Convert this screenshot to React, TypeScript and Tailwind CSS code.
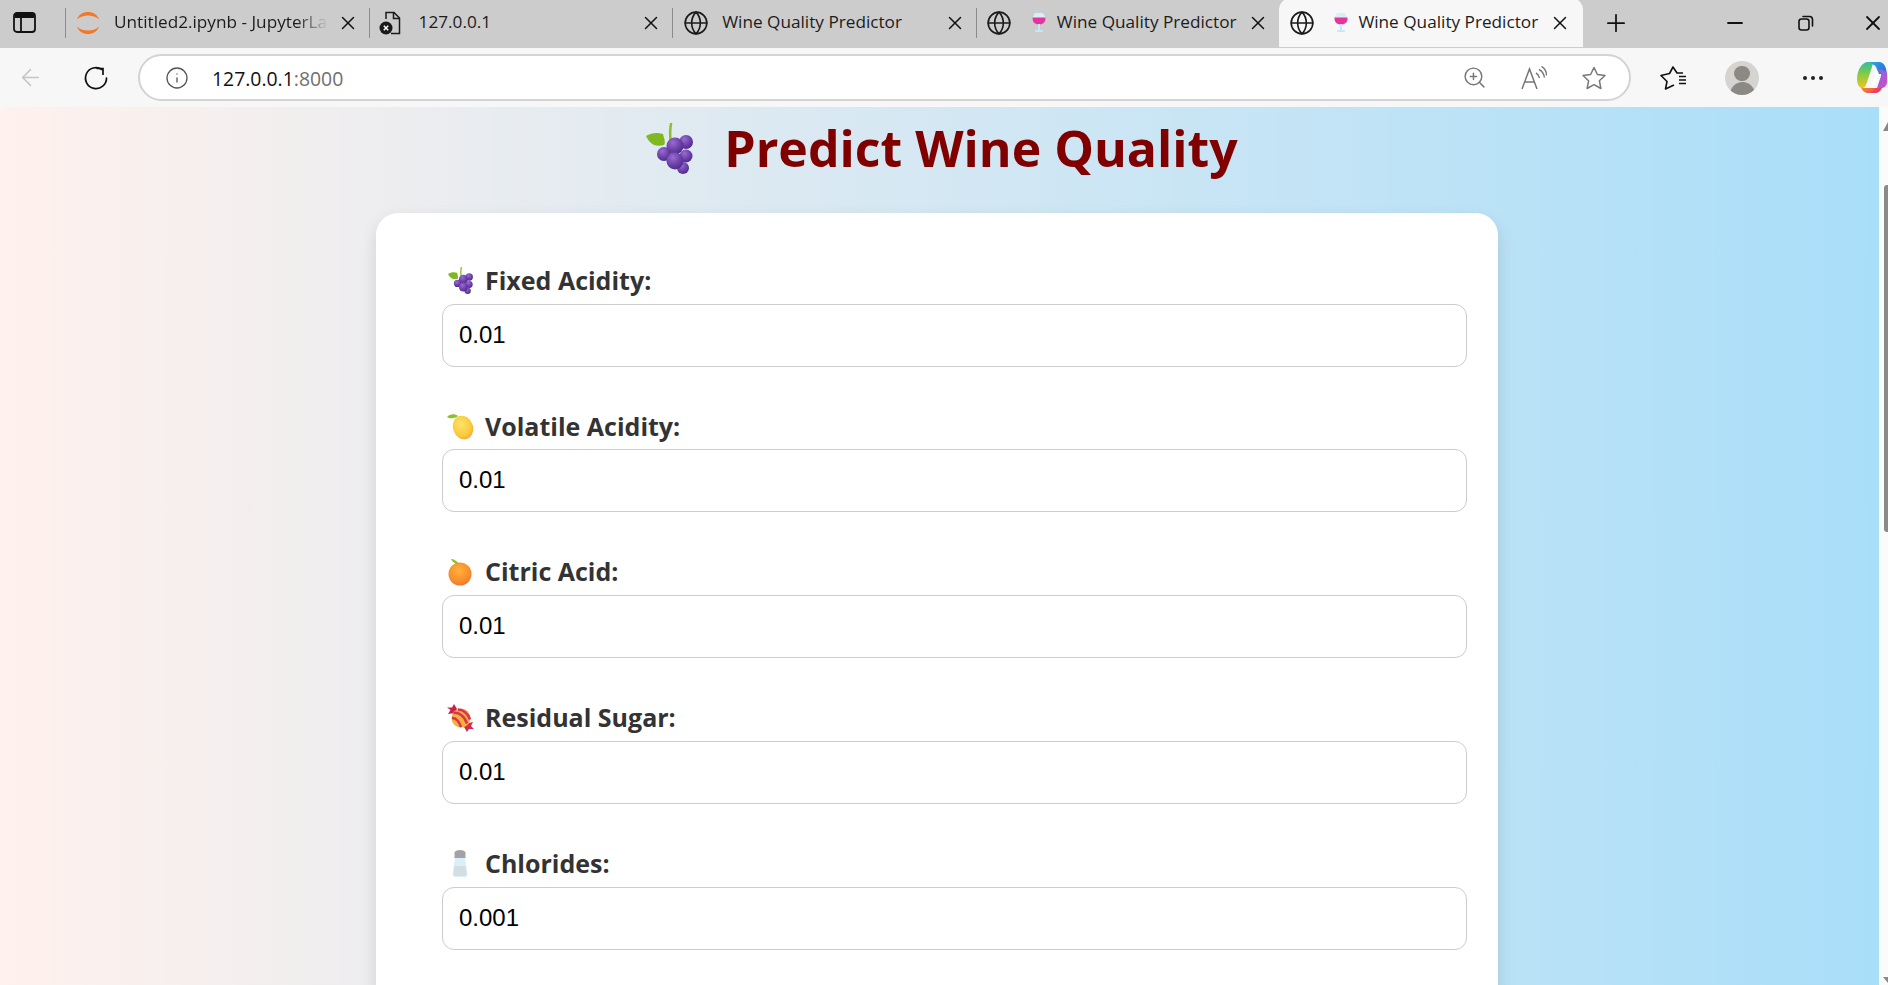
import React from 'react';
import { ArrowLeft, Globe, Info, Minus, Plus, X, ZoomIn } from 'lucide-react';

const SANS = 'font-["Open_Sans","Noto_Sans",sans-serif]';

const JupyterIcon = () => (
  <svg width="26" height="24" viewBox="0 0 26 24" fill="none" className="shrink-0">
    <path d="M2 8.500C4 3 8 1 13 1s9 2 11 7.500C21 5.500 17 4.500 13 4.500S5 5.500 2 8.500Z" fill="#f37726" />
    <path d="M2 15.500C4 21 8 23 13 23s9-2 11-7.500C21 18.500 17 19.500 13 19.500S5 18.500 2 15.500Z" fill="#f37726" />
  </svg>
);

const FileErrorIcon = () => (
  <svg width="22" height="26" viewBox="0 0 22 26" fill="none" className="shrink-0">
    <path d="M7 9V2.500h8L20.500 8v15.500H12" stroke="#1a1a1a" strokeWidth="1.500" />
    <path d="M14.500 2.500V8.500h6" stroke="#1a1a1a" strokeWidth="1.500" />
    <circle cx="7" cy="18" r="6.500" fill="#1a1a1a" />
    <path d="M4.800 15.800l4.400 4.400M9.200 15.800l-4.400 4.400" stroke="#fff" strokeWidth="1.500" />
  </svg>
);

const WineIcon = () => (
  <svg width="14" height="19" viewBox="0 0 14 19" fill="none" className="shrink-0">
    <path d="M3 0h8l2.500 5c.5 4-2.500 6.500-6.500 6.500S0 9 .5 5Z" fill="#d6effa" />
    <path d="M.6 4.500h12.800C14 9 11 11.500 7 11.500S0 9 .6 4.500Z" fill="#e5359a" />
    <rect x="6" y="11" width="2" height="6" fill="#c5e8f6" />
    <rect x="3" y="17" width="8" height="2" rx="1" fill="#c5e8f6" />
  </svg>
);

const GrapesIcon = ({ w, h }: { w: number; h: number }) => (
  <svg width={w} height={h} viewBox="0 0 47 51" fill="none" className="shrink-0">
    <defs>
      <radialGradient id="grape" cx="38%" cy="30%" r="75%">
        <stop offset="0%" stopColor="#9a6bd0" />
        <stop offset="60%" stopColor="#6b3fa8" />
        <stop offset="100%" stopColor="#4c2a85" />
      </radialGradient>
    </defs>
    <path d="M25 1c-1.200 5-1 10-.5 17" stroke="#8ac226" strokeWidth="2.500" strokeLinecap="round" />
    <path d="M0 13c5-3 11-4 17-2 1 4 3 9 1 11-3 1-7 1-10 0C4 20 2 17 0 13Z" fill="#7fb81f" />
    <circle cx="40" cy="19" r="7" fill="url(#grape)" />
    <circle cx="40" cy="33" r="6.500" fill="url(#grape)" />
    <circle cx="37" cy="45" r="6" fill="url(#grape)" />
    <circle cx="18" cy="31" r="7" fill="url(#grape)" />
    <circle cx="29" cy="23" r="8.500" fill="url(#grape)" />
    <circle cx="29" cy="38" r="8.500" fill="url(#grape)" />
  </svg>
);

const LemonIcon = () => (
  <svg width="27" height="27" viewBox="0 0 27 27" fill="none" className="shrink-0">
    <defs>
      <radialGradient id="lemon" cx="45%" cy="35%" r="70%">
        <stop offset="0%" stopColor="#ffe36b" />
        <stop offset="70%" stopColor="#f9c93c" />
        <stop offset="100%" stopColor="#f3a53a" />
      </radialGradient>
    </defs>
    <ellipse cx="16" cy="14.500" rx="10" ry="12" transform="rotate(-18 16 14.500)" fill="url(#lemon)" />
    <path d="M0 4C3 .5 8 .5 11 3 8 5.500 3 6 0 4Z" fill="#8ac226" />
  </svg>
);

const OrangeIcon = () => (
  <svg width="24" height="28" viewBox="0 0 24 28" fill="none" className="shrink-0">
    <defs>
      <radialGradient id="orange" cx="45%" cy="35%" r="70%">
        <stop offset="0%" stopColor="#ffb13c" />
        <stop offset="75%" stopColor="#f68a2a" />
        <stop offset="100%" stopColor="#ef6a3a" />
      </radialGradient>
    </defs>
    <circle cx="12" cy="16" r="11.500" fill="url(#orange)" />
    <path d="M3 1c3 0 6 2 8 5-3 .500-6-1-8-5Z" fill="#8ac226" />
  </svg>
);

const CandyIcon = () => (
  <svg width="27" height="28" viewBox="0 0 27 28" fill="none" className="shrink-0">
    <path d="M8 9 1 10 3.500 6 0 3.500l5 0L7 0l3 5Z" fill="#c9234a" />
    <path d="M18 20l8-2-2 4 3 3-5 0-2 3-3-5Z" fill="#d42a50" />
    <circle cx="14" cy="14" r="9.500" fill="#f5b13d" />
    <path d="M6.500 9c5-1 11 3 13.500 10.500M11 5.500c5 0 10 4 12 10M5 14c4 0 7 3 9 9" stroke="#d8344f" strokeWidth="2.500" fill="none" />
  </svg>
);

const SaltIcon = () => (
  <svg width="16" height="27" viewBox="0 0 16 27" fill="none" className="shrink-0">
    <path d="M3 8h10l2.500 16c0 2-1 3-3 3h-9c-2 0-3-1-3-3Z" fill="#d9f0fb" />
    <path d="M2.500 16h11l1 8c0 1.500-1 2-2 2h-9c-1 0-2-.500-2-2Z" fill="#d4dde2" />
    <path d="M2.500 8V2.500C3 1 5 0 8 0s5 1 5.500 2.500V8Z" fill="#a3a3a3" />
  </svg>
);

const SidebarIcon = () => (
  <svg width="23" height="21" viewBox="0 0 23 21" fill="none" className="shrink-0">
    <rect x="1" y="1" width="21" height="19" rx="3" stroke="#111" strokeWidth="1.800" />
    <path d="M2 2h19v4H2Z" fill="#111" />
    <path d="M8 6v14" stroke="#111" strokeWidth="1.800" />
  </svg>
);

const ReloadIcon = () => (
  <svg width="26" height="26" viewBox="0 0 26 26" fill="none">
    <path d="M19 4.500A10.500 10.500 0 1 0 23.500 13" stroke="#111" strokeWidth="1.700" strokeLinecap="round" />
    <path d="M13.500 3.500h6.500V10" stroke="#111" strokeWidth="1.700" />
  </svg>
);

const ReadAloudIcon = () => (
  <svg width="26" height="24" viewBox="0 0 26 24" fill="none">
    <path d="M1 23 8.500 3 16 23M3.800 16h9.500" stroke="#777" strokeWidth="1.500" />
    <path d="M15 7c2 1 3 3 3.500 5M18 3.500c3 1.500 5 4.500 5.500 8M20.500 0.500c3.500 2 5 5.500 5 9" stroke="#777" strokeWidth="1.400" />
  </svg>
);

const StarIcon = () => (
  <svg width="26" height="24" viewBox="0 0 26 24" fill="none">
    <path d="m13 1.500 3.400 7 7.600 1-5.600 5.300 1.500 7.700-6.900-3.800-6.900 3.800 1.500-7.700L2 9.500l7.600-1Z" stroke="#777" strokeWidth="1.500" strokeLinejoin="round" />
  </svg>
);

const FavoritesIcon = () => (
  <svg width="27" height="26" viewBox="0 0 27 26" fill="none">
    <path d="M23 8H17L13 2 9.500 8.500 1 10.500 7 16.500 5.500 24 14 20" stroke="#111" strokeWidth="1.600" strokeLinejoin="round" />
    <path d="M19 11.500h7M19 15h7M19 18.500h7" stroke="#111" strokeWidth="1.500" />
  </svg>
);

const RestoreIcon = () => (
  <svg width="16" height="16" viewBox="0 0 16 16" fill="none">
    <rect x="1" y="4" width="10" height="11" rx="2.500" stroke="#111" strokeWidth="1.600" />
    <path d="M5 1.500h6.500A3 3 0 0 1 14.500 4.500V11" stroke="#111" strokeWidth="1.600" strokeLinecap="round" />
  </svg>
);

const Avatar = () => (
  <div className="w-[34px] h-[34px] rounded-full bg-[#d5d4d0] overflow-hidden flex flex-col items-center shrink-0">
    <div className="w-4 h-4 mt-[5px] rounded-full bg-[#8c8985]" />
    <div className="w-[25px] h-[13px] mt-[1px] rounded-t-full bg-[#8c8985]" />
  </div>
);

const CopilotIcon = () => (
  <svg width="30" height="31" viewBox="0 0 30 31" fill="none" className="shrink-0">
    <defs>
      <linearGradient id="copA" x1="0" y1="0" x2="1" y2="0.400">
        <stop offset="0%" stopColor="#2bb6d8" />
        <stop offset="100%" stopColor="#2f6fe4" />
      </linearGradient>
      <linearGradient id="copB" x1="0" y1="0" x2="0" y2="1">
        <stop offset="0%" stopColor="#2fbf9f" />
        <stop offset="50%" stopColor="#8ccb3e" />
        <stop offset="100%" stopColor="#f5c422" />
      </linearGradient>
      <linearGradient id="copC" x1="0" y1="0" x2="1" y2="0.600">
        <stop offset="0%" stopColor="#f59a23" />
        <stop offset="100%" stopColor="#ee3f5f" />
      </linearGradient>
      <linearGradient id="copD" x1="0" y1="0" x2="1" y2="1">
        <stop offset="0%" stopColor="#7d6ae6" />
        <stop offset="100%" stopColor="#d24fc0" />
      </linearGradient>
    </defs>
    <path d="M11 0h11c4 0 6 3 7 7l1 5H22l-3-7c-1-2-3-3-8-3Z" fill="url(#copA)" />
    <path d="M11 0c4 0 5 2 4 5L9 23c-1 2-2 3-4 3-3 0-5-4-5-9C0 8 5 0 11 0Z" fill="url(#copB)" />
    <path d="M20 8c2-1 10 0 10 4v8c0 4-3 6-6 6h-4l4-12c.5-3-1-5-4-6Z" fill="url(#copD)" />
    <path d="M9 26h15c-1 3-4 5-7 5h-5c-4 0-7-2-8-6 2 1 3 1 5 1Z" fill="url(#copC)" />
    <path d="M19 26h6c-1 3-4 5-7 5h-5c3-1 5-3 6-5Z" fill="#ee3f5f" />
    <path d="M19 8c2 1 3 3 2 6l-3 8c-1 2-2 3-4 4l4-13c.5-2 .5-3 1-5Z" fill="#ffffff" />
  </svg>
);

const Tab = ({
  icon,
  extra,
  title,
  titleClass,
  closeClass,
  fade,
  active,
}: {
  icon: React.ReactNode;
  extra?: React.ReactNode;
  title: string;
  titleClass: string;
  closeClass: string;
  fade?: boolean;
  active?: boolean;
}) => (
  <div
    className={
      active
        ? 'w-[303.600px] h-12 shrink-0 flex items-center pl-[10px] bg-[#f7f7f7] rounded-t-[10px]'
        : 'w-[303.600px] h-12 shrink-0 flex items-center pl-[10px]'
    }
  >
    {icon}
    {extra}
    <span
      className={
        fade
          ? `${titleClass} text-[17.200px] leading-[24px] pb-[1px] text-[#1c1c1c] whitespace-nowrap overflow-hidden [mask-image:linear-gradient(to_right,black_85%,transparent)]`
          : `${titleClass} text-[17.200px] leading-[24px] pb-[1px] text-[#1c1c1c] whitespace-nowrap`
      }
    >
      {title}
    </span>
    <X className={`ml-auto shrink-0 text-[#111] ${closeClass}`} size={22} strokeWidth={1.600} />
  </div>
);

const Sep = () => <div className="w-px h-[30px] bg-[#8b8b8b] shrink-0 -mr-px z-10" />;

const fields = [
  { label: 'Fixed Acidity:', value: '0.01', icon: <GrapesIcon w={25} h={27} /> },
  { label: 'Volatile Acidity:', value: '0.01', icon: <LemonIcon /> },
  { label: 'Citric Acid:', value: '0.01', icon: <OrangeIcon /> },
  { label: 'Residual Sugar:', value: '0.01', icon: <CandyIcon /> },
  { label: 'Chlorides:', value: '0.001', icon: <SaltIcon /> },
];

export default function App() {
  return (
    <div className={`h-screen w-full overflow-hidden flex flex-col bg-[#f7f7f7] ${SANS}`}>
      {/* tab strip */}
      <div className="h-12 bg-[#cccccc] flex items-center shrink-0 pb-[3px]">
        <div className="w-[65px] shrink-0 pl-[13px]">
          <SidebarIcon />
        </div>
        <Sep />
        <Tab icon={<JupyterIcon />} title="Untitled2.ipynb - JupyterLab" titleClass="w-[214px] ml-[13px]" closeClass="mr-[10px]" fade />
        <Sep />
        <Tab icon={<FileErrorIcon />} title="127.0.0.1" titleClass="ml-[18px]" closeClass="mr-[10px]" />
        <Sep />
        <Tab icon={<Globe size={26} strokeWidth={1.500} className="shrink-0 text-[#1a1a1a] ml-px" />} title="Wine Quality Predictor" titleClass="ml-[13px]" closeClass="mr-[10px]" />
        <Sep />
        <Tab
          icon={<Globe size={26} strokeWidth={1.500} className="shrink-0 text-[#1a1a1a]" />}
          extra={<div className="ml-[20px]"><WineIcon /></div>}
          title="Wine Quality Predictor"
          titleClass="ml-[11px]"
          closeClass="mr-[10px]"
        />
        <Tab
          active
          icon={<Globe size={26} strokeWidth={1.500} className="shrink-0 text-[#1a1a1a]" />}
          extra={<div className="ml-[19px]"><WineIcon /></div>}
          title="Wine Quality Predictor"
          titleClass="ml-[10px]"
          closeClass="mr-[12px]"
        />
        <div className="ml-[19px]">
          <Plus size={28} strokeWidth={1.500} className="text-[#111]" />
        </div>
        <div className="ml-[93px] flex items-center">
          <Minus size={24} strokeWidth={1.800} className="text-[#111]" />
          <div className="ml-[51px]"><RestoreIcon /></div>
          <X size={24} strokeWidth={1.800} className="ml-[47px] text-[#111]" />
        </div>
      </div>

      {/* toolbar */}
      <div className="h-[59px] bg-[#f7f7f7] flex items-center shrink-0">
        <div className="ml-[17px]">
          <ArrowLeft size={27} strokeWidth={1.300} className="text-[#c4c4c4]" />
        </div>
        <div className="ml-[39px]"><ReloadIcon /></div>
        <div className="ml-[29px] w-[1493px] h-[47px] rounded-full bg-white border-2 border-[#d3d3d3] flex items-center pl-[25px] pr-[22px]">
          <Info size={24} strokeWidth={1.300} className="text-[#555]" />
          <span className="ml-[23px] text-[19.400px] leading-[26px] pt-[3px] text-[#111]">
            127.0.0.1<span className="text-[#6f6f6f]">:8000</span>
          </span>
          <div className="ml-auto flex items-center gap-[34px]">
            <ZoomIn size={25} strokeWidth={1.400} className="text-[#777]" />
            <ReadAloudIcon />
            <StarIcon />
          </div>
        </div>
        <div className="ml-[29px]"><FavoritesIcon /></div>
        <div className="ml-[38px]"><Avatar /></div>
        <div className="ml-[44px] flex gap-[4px]">
          <div className="w-1 h-1 rounded-full bg-[#222]" />
          <div className="w-1 h-1 rounded-full bg-[#222]" />
          <div className="w-1 h-1 rounded-full bg-[#222]" />
        </div>
        <div className="ml-[34px]"><CopilotIcon /></div>
      </div>

      {/* page */}
      <div className="flex-1 min-h-0 flex">
        <div className="flex-1 min-w-0 overflow-hidden rounded-tl-lg bg-[linear-gradient(to_right,#fff1ed,#a9def9)]">
          <div className="h-[106px] flex items-start justify-center pt-[16px] pl-[5px]">
            <GrapesIcon w={47} h={51} />
            <h1 className="ml-[31px] -mt-[2px] text-[50px] leading-[54px] font-bold text-[#800000] font-['Open_Sans',sans-serif]">
              Predict Wine Quality
            </h1>
          </div>
          <div className="ml-[376px] w-[1122px] pl-[66px] pr-[31px] pt-[51.600px] bg-white rounded-[22px] shadow-[0_8px_18px_rgba(0,0,0,0.12)] h-[900px]">
            {fields.map((f) => (
              <div key={f.label} className="mb-[43.800px]">
                <label className="h-[30px] mb-[9px] pt-[2px] flex items-center text-[25px] font-bold text-[#333] font-['Open_Sans',sans-serif]">
                  <span className="w-[36px] mr-[7px] flex justify-center">{f.icon}</span>
                  {f.label}
                </label>
                <input
                  readOnly
                  value={f.value}
                  className="w-full h-[63px] px-4 pb-[1px] text-[24px] text-black bg-white border border-[#cccccc] rounded-[12px] font-['Liberation_Sans',Arial,sans-serif]"
                />
              </div>
            ))}
          </div>
        </div>

        {/* scrollbar */}
        <div className="w-[9px] shrink-0 bg-[#fbfbfb] flex flex-col items-end">
          <div className="mt-[15px] w-0 h-0 border-l-[5px] border-b-[9px] border-l-transparent border-b-[#888]" />
          <div className="mt-[54px] w-[4px] h-[347px] rounded-l-[3px] bg-[#8a8a8a]" />
          <div className="mt-auto mb-[2px] w-0 h-0 border-l-[5px] border-t-[6px] border-l-transparent border-t-[#888]" />
        </div>
      </div>
    </div>
  );
}
